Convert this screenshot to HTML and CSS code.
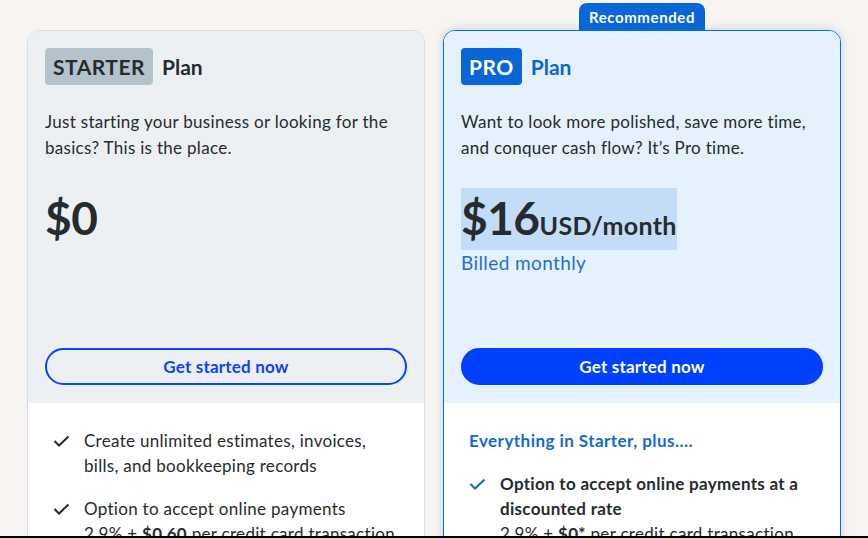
FILE: index.html
```html
<!DOCTYPE html>
<html lang="en">
<head>
  <meta charset="UTF-8">
  <meta name="viewport" content="width=device-width, initial-scale=1.0">
  <title>Plans</title>
  <link rel="stylesheet" href="styles.css">
</head>
<body>
  <div class="plans">
    <div class="plan starter">
      <div class="plan-top">
        <h3 class="plan-name"><span class="badge">STARTER</span> Plan</h3>
        <p class="desc">Just starting your business or looking for the basics? This is the place.</p>
        <div class="price-box">
          <div class="price"><span class="amount">$0</span></div>
        </div>
        <a href="#" class="btn btn-outline">Get started now</a>
      </div>
      <div class="plan-body">
        <ul class="features">
          <li>
            <svg class="check" viewBox="0 0 17 12"><polyline points="1.5,6 6,10.5 15.5,1.5"/></svg>
            <span>Create unlimited estimates, invoices, bills, and bookkeeping records</span>
          </li>
          <li>
            <svg class="check" viewBox="0 0 17 12"><polyline points="1.5,6 6,10.5 15.5,1.5"/></svg>
            <span>Option to accept online payments<br><span class="fee">2.9% + <b>$0.60</b> per credit card transaction</span></span>
          </li>
        </ul>
      </div>
    </div>

    <div class="plan pro">
      <div class="tag">Recommended</div>
      <div class="plan-top">
        <h3 class="plan-name"><span class="badge">PRO</span> Plan</h3>
        <p class="desc">Want to look more polished, save more time, and conquer cash flow? It’s Pro time.</p>
        <div class="price-box">
          <div class="price selected"><span class="amount">$16</span><span class="unit">USD/month</span></div>
          <div class="billed">Billed monthly</div>
        </div>
        <a href="#" class="btn btn-solid">Get started now</a>
      </div>
      <div class="plan-body">
        <h4 class="plus">Everything in Starter, plus....</h4>
        <ul class="features">
          <li>
            <svg class="check" viewBox="0 0 17 12"><polyline points="1.5,6 6,10.5 15.5,1.5"/></svg>
            <span><b>Option to accept online payments at a discounted rate</b><br><span class="fee">2.9% + <b>$0*</b> per credit card transaction</span></span>
          </li>
        </ul>
      </div>
    </div>
  </div>
</body>
</html>
```

FILE: styles.css
```css
* {
  margin: 0;
  padding: 0;
  box-sizing: border-box;
}

html, body {
  height: 100%;
  overflow: hidden;
}

body {
  font-family: Lato, "Noto Sans", sans-serif;
  background-color: #f8f4f1;
  color: #262b2e;
}

/* screenshot has a dark strip on its last rows */
body::after {
  content: "";
  position: fixed;
  left: 0;
  right: 0;
  bottom: 0;
  height: 2px;
  background: #000;
}

.plans {
  display: flex;
  gap: 18px;
  padding: 30px 0 0 27px;
}

.plan {
  position: relative;
  width: 398px;
  height: 600px;
  border: 1px solid #d5dde5;
  border-radius: 12px;
  background-color: #fff;
}

.plan-top {
  padding: 17px 17px 18px;
  background-color: #edf0f3;
  border-radius: 11px 11px 0 0;
}

.plan-name {
  display: flex;
  align-items: center;
  gap: 9px;
  font-size: 21px;
  font-weight: 700;
  height: 37px;
}

.badge {
  display: inline-block;
  height: 37px;
  line-height: 37px;
  padding: 0 8px;
  border-radius: 4px;
  background-color: #b4c2cc;
  letter-spacing: 0.5px;
}

.desc {
  margin-top: 24px;
  font-size: 17px;
  line-height: 26px;
  letter-spacing: 0.3px;
  padding-right: 8px;
}

.price-box {
  height: 187px;
  padding-top: 27px;
}

.price {
  display: inline-block;
  height: 62px;
  line-height: 60px;
  font-weight: 700;
  white-space: nowrap;
}

.price.selected {
  background-color: #c3ddf8;
}

.amount {
  font-size: 46px;
  letter-spacing: -0.5px;
}

.unit {
  font-size: 25px;
  letter-spacing: 0.3px;
}

.billed {
  font-size: 19px;
  line-height: 26px;
  letter-spacing: 0.4px;
  color: #1f6fd1;
}

.btn {
  display: block;
  height: 37px;
  line-height: 33px;
  border-radius: 19px;
  text-align: center;
  text-decoration: none;
  font-size: 17px;
  font-weight: 700;
  letter-spacing: 0.2px;
}

.btn-outline {
  border: 2px solid #0a43ff;
  color: #0a43ff;
}

.btn-solid {
  border: 2px solid #0040ff;
  background-color: #0040ff;
  color: #fff;
}

.plan-body {
  padding: 25px 25px 0;
}

.features {
  list-style: none;
}

.features li {
  display: flex;
  gap: 14px;
  font-size: 17px;
  line-height: 25px;
  letter-spacing: 0.3px;
  margin-bottom: 18px;
}

.fee {
  white-space: nowrap;
}

.check {
  flex: none;
  width: 17px;
  height: 12px;
  margin-top: 7px;
  fill: none;
  stroke: #262b2e;
  stroke-width: 2;
}

.pro {
  border-color: #0a6ad8;
  box-shadow: 0 0 8px rgba(10, 106, 216, 0.25);
}

.pro .plan-top {
  background-color: #e5f1fd;
}

.pro .badge {
  background-color: #0966d6;
  color: #fff;
}

.pro .plan-name {
  color: #0966d6;
}

.pro .check {
  stroke: #1469d3;
}

.tag {
  position: absolute;
  top: -28px;
  left: 135px;
  width: 126px;
  height: 28px;
  line-height: 28px;
  border-radius: 8px 8px 0 0;
  background-color: #0966d6;
  color: #fff;
  text-align: center;
  font-size: 15px;
  font-weight: 700;
  letter-spacing: 0.6px;
}

.plus {
  font-size: 17px;
  line-height: 25px;
  font-weight: 700;
  letter-spacing: 0.45px;
  color: #1469d3;
  margin-bottom: 18px;
}
```
